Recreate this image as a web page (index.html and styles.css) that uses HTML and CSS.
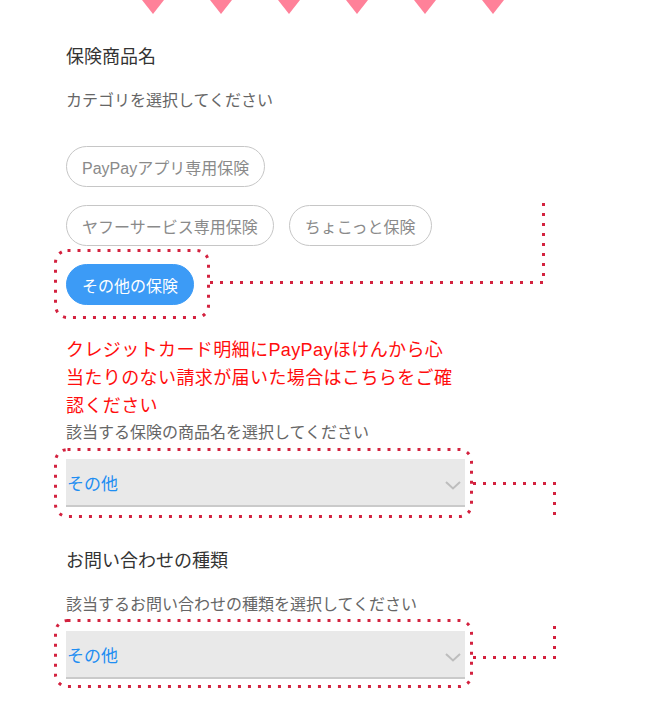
FILE: index.html
```html
<!DOCTYPE html>
<html lang="ja">
<head>
<meta charset="utf-8">
<title>保険商品名</title>
<link rel="stylesheet" href="styles.css">
</head>
<body>
<div class="page">
  <div class="tri-row">
    <span class="tri"></span><span class="tri"></span><span class="tri"></span>
    <span class="tri"></span><span class="tri"></span><span class="tri"></span>
  </div>

  <section class="form">
    <h2 class="heading">保険商品名</h2>
    <p class="sub">カテゴリを選択してください</p>
    <div class="chips">
      <span class="chip">PayPayアプリ専用保険</span>
      <span class="chip">ヤフーサービス専用保険</span>
      <span class="chip">ちょこっと保険</span>
      <span class="chip chip-active">その他の保険</span>
    </div>
    <p class="notice">クレジットカード明細にPayPayほけんから心<br>当たりのない請求が届いた場合はこちらをご確<br>認ください</p>
    <p class="sub sub-tight">該当する保険の商品名を選択してください</p>
    <div class="select">
      <span class="select-value">その他</span>
      <svg class="chevron" width="16" height="9" viewBox="0 0 16 9"><polyline points="1,1 8,7.5 15,1" fill="none" stroke="#bdbdbd" stroke-width="2"/></svg>
    </div>

    <h2 class="heading heading-2">お問い合わせの種類</h2>
    <p class="sub">該当するお問い合わせの種類を選択してください</p>
    <div class="select">
      <span class="select-value">その他</span>
      <svg class="chevron" width="16" height="9" viewBox="0 0 16 9"><polyline points="1,1 8,7.5 15,1" fill="none" stroke="#bdbdbd" stroke-width="2"/></svg>
    </div>
  </section>

  <svg class="annotations" width="646" height="710" viewBox="0 0 646 710">
    <g fill="none" stroke="#d3223f" stroke-width="3" stroke-dasharray="3 7">
      <rect x="55.5" y="250.5" width="153" height="67" rx="12"/>
      <polyline points="210,282.5 543.5,282.5 543.5,202"/>
      <rect x="55.5" y="449.5" width="416" height="67" rx="12"/>
      <polyline points="473,483.5 554.5,483.5 554.5,518"/>
      <rect x="55.5" y="620.5" width="416" height="66" rx="12"/>
      <polyline points="473,657.5 554.5,657.5 554.5,626"/>
    </g>
  </svg>
</div>
</body>
</html>
```

FILE: styles.css
```css
html, body {
  margin: 0;
  padding: 0;
  background: #ffffff;
}

body {
  font-family: "Liberation Sans", "Noto Sans CJK JP", sans-serif;
  overflow: hidden;
}

.page {
  position: relative;
  width: 646px;
  height: 710px;
}

.tri-row {
  display: flex;
  gap: 46px;
  padding-left: 142px;
  height: 14px;
}

.tri {
  width: 0;
  height: 0;
  border-left: 11px solid transparent;
  border-right: 11px solid transparent;
  border-top: 14px solid #ff8199;
}

.form {
  padding-left: 66px;
  width: 399px;
}

.heading {
  margin: 30px 0 0 0;
  font-size: 18px;
  font-weight: 400;
  line-height: 26px;
  color: #333333;
}

.heading-2 {
  margin-top: 41px;
}

.sub {
  margin: 19px 0 0 0;
  font-size: 16px;
  line-height: 24px;
  color: #666666;
}

.sub-tight {
  margin-top: 1px;
}

.chips {
  display: flex;
  flex-wrap: wrap;
  column-gap: 15px;
  row-gap: 18px;
  margin-top: 33px;
}

.chip {
  box-sizing: border-box;
  height: 41px;
  padding: 0 15px;
  border: 1px solid #c6c6c6;
  border-radius: 21px;
  display: flex;
  align-items: center;
  font-size: 16px;
  color: #8a8a8a;
  white-space: nowrap;
}

.chip-active {
  background: #3c9bf6;
  border-color: #3c9bf6;
  color: #ffffff;
}

.notice {
  margin: 31px 0 0 0;
  font-size: 18px;
  letter-spacing: 0.4px;
  line-height: 28px;
  color: #ff0d0d;
  white-space: nowrap;
}

.select {
  box-sizing: border-box;
  margin-top: 14px;
  height: 48px;
  background: #e9e9e9;
  border-bottom: 2px solid #cacaca;
  display: flex;
  align-items: center;
  justify-content: space-between;
}

.select-value {
  padding-left: 1px;
  font-size: 17px;
  color: #1f8ef2;
}

.chevron {
  margin-right: 4px;
  margin-top: 7px;
}

.annotations {
  position: absolute;
  left: 0;
  top: 0;
  pointer-events: none;
}
```
